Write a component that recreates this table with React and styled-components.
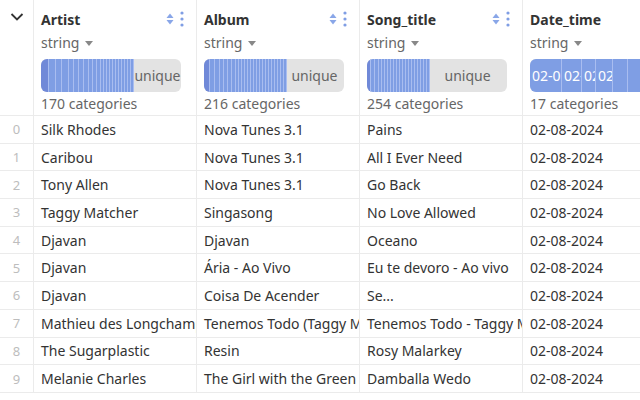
import React from "react";
import styled, { createGlobalStyle } from "styled-components";

const GlobalStyle = createGlobalStyle`
  html, body {
    margin: 0;
    padding: 0;
    background: #ffffff;
    overflow: hidden;
  }
  body {
    font-family: "Noto Sans", "Open Sans", sans-serif;
    color: #333;
  }
`;

const Table = styled.div`
  display: grid;
  grid-template-columns: 33px repeat(4, 163px);
  width: 800px;
`;

const HeadCell = styled.div`
  display: flex;
  flex-direction: column;
  height: 116px;
  box-sizing: border-box;
  padding: 7px 15px 0 7px;
  border-left: ${(p) => (p.$first ? "none" : "1px solid #ebebeb")};
  border-bottom: 1px solid #ebebeb;
  min-width: 0;
`;

const IndexHead = styled.div`
  height: 116px;
  box-sizing: border-box;
  border-bottom: 1px solid #ebebeb;
  display: flex;
  justify-content: center;
  padding-top: 12px;
`;

const TitleRow = styled.div`
  display: flex;
  align-items: center;
  height: 24px;
`;

const Title = styled.div`
  flex: 1;
  font-weight: 700;
  font-size: 14px;
  color: #333;
  white-space: nowrap;
`;

const Icons = styled.div`
  display: flex;
  align-items: center;
  gap: 6px;
  margin-right: -3px;
`;

const TypeRow = styled.div`
  height: 22px;
  display: flex;
  align-items: center;
  gap: 6px;
  font-size: 14px;
  color: #666;
`;

const Caret = styled.span`
  width: 0;
  height: 0;
  border-left: 4px solid transparent;
  border-right: 4px solid transparent;
  border-top: 5px solid #888;
  margin-top: 2px;
`;

const Bar = styled.div`
  margin-top: 6px;
  height: 33px;
  border-radius: 6px;
  background: #e3e3e3;
  display: flex;
  overflow: hidden;
  position: relative;
`;

const Seg = styled.div`
  flex: none;
  height: 100%;
  box-sizing: border-box;
  background: ${(p) => (p.$dark ? "#7089d8" : "#7f9ee4")};
  border-right: 1px solid #a9bdf0;
  color: #fff;
  font-size: 14px;
  line-height: 33px;
  padding-left: 2px;
  overflow: hidden;
  white-space: nowrap;
`;

const Unique = styled.div`
  flex: 1;
  display: flex;
  align-items: center;
  justify-content: center;
  font-size: 14px;
  color: #666;
  padding-right: 2px;
`;

const Categories = styled.div`
  height: 22px;
  display: flex;
  align-items: center;
  font-size: 14px;
  color: #666;
  white-space: nowrap;
`;

const IndexCell = styled.div`
  height: 27.7px;
  box-sizing: border-box;
  border-bottom: 1px solid #ebebeb;
  display: flex;
  align-items: center;
  justify-content: center;
  font-size: 13px;
  color: #bdbdbd;
`;

const Cell = styled.div`
  height: 27.7px;
  box-sizing: border-box;
  border-left: 1px solid #ebebeb;
  border-bottom: 1px solid #ebebeb;
  display: flex;
  align-items: center;
  padding-left: 7px;
  font-size: 14px;
  color: #333;
  white-space: nowrap;
  overflow: hidden;
  min-width: 0;
`;

const SortIcon = () => (
  <svg width="8" height="12" viewBox="0 0 8 12">
    <path d="M4 0.5 L7.5 5 H0.5 Z" fill="#89a6e8" />
    <path d="M4 11.5 L7.5 7 H0.5 Z" fill="#89a6e8" />
  </svg>
);

const Kebab = () => (
  <svg width="4" height="16" viewBox="0 0 4 16">
    <circle cx="2" cy="2" r="1.6" fill="#7f9ee4" />
    <circle cx="2" cy="8" r="1.6" fill="#7f9ee4" />
    <circle cx="2" cy="14" r="1.6" fill="#7f9ee4" />
  </svg>
);

const Chevron = () => (
  <svg width="14" height="10" viewBox="0 0 14 10">
    <path d="M1.5 2 L7 7.5 L12.5 2" fill="none" stroke="#333" strokeWidth="1.8" />
  </svg>
);

function makeSegs(total, count) {
  // first segments wide, later ones narrow
  const weights = [];
  for (let i = 0; i < count; i++) weights.push(Math.pow(0.9, i) + 0.25);
  const sum = weights.reduce((a, b) => a + b, 0);
  return weights.map((w) => (w / sum) * total);
}

const columns = [
  { name: "Artist", blue: 90, segs: 22, cats: "170 categories", icons: true },
  { name: "Album", blue: 69, segs: 24, cats: "216 categories", icons: true },
  { name: "Song_title", blue: 47, segs: 20, cats: "254 categories", icons: true },
  { name: "Date_time", cats: "17 categories", date: true },
];

const dateSegs = [32, 20, 14, 17, 15, 14, 15, 14, 14, 14];

const rows = [
  ["Silk Rhodes", "Nova Tunes 3.1", "Pains", "02-08-2024"],
  ["Caribou", "Nova Tunes 3.1", "All I Ever Need", "02-08-2024"],
  ["Tony Allen", "Nova Tunes 3.1", "Go Back", "02-08-2024"],
  ["Taggy Matcher", "Singasong", "No Love Allowed", "02-08-2024"],
  ["Djavan", "Djavan", "Oceano", "02-08-2024"],
  ["Djavan", "Ária - Ao Vivo", "Eu te devoro - Ao vivo", "02-08-2024"],
  ["Djavan", "Coisa De Acender", "Se...", "02-08-2024"],
  ["Mathieu des Longchamps", "Tenemos Todo (Taggy Matcher Remix)", "Tenemos Todo - Taggy Matcher Remix", "02-08-2024"],
  ["The Sugarplastic", "Resin", "Rosy Malarkey", "02-08-2024"],
  ["Melanie Charles", "The Girl with the Green Skin", "Damballa Wedo", "02-08-2024"],
];

function HeaderBar({ col }) {
  if (col.date) {
    return (
      <Bar>
        {dateSegs.map((w, i) => (
          <Seg key={i} style={{ width: w }}>
            {i < 4 ? "02-08-2024" : ""}
          </Seg>
        ))}
      </Bar>
    );
  }
  const segs = makeSegs(col.blue, col.segs);
  return (
    <Bar>
      {segs.map((w, i) => (
        <Seg key={i} $dark={i === 0} style={{ width: w }} />
      ))}
      <Unique>unique</Unique>
    </Bar>
  );
}

export default function App() {
  return (
    <>
      <GlobalStyle />
      <Table>
        <IndexHead>
          <Chevron />
        </IndexHead>
        {columns.map((col) => (
          <HeadCell key={col.name}>
            <TitleRow>
              <Title>{col.name}</Title>
              {col.icons && (
                <Icons>
                  <SortIcon />
                  <Kebab />
                </Icons>
              )}
            </TitleRow>
            <TypeRow>
              string <Caret />
            </TypeRow>
            <HeaderBar col={col} />
            <Categories>{col.cats}</Categories>
          </HeadCell>
        ))}
        {rows.map((r, i) => (
          <React.Fragment key={i}>
            <IndexCell>{i}</IndexCell>
            {r.map((v, j) => (
              <Cell key={j}>{v}</Cell>
            ))}
          </React.Fragment>
        ))}
      </Table>
    </>
  );
}
